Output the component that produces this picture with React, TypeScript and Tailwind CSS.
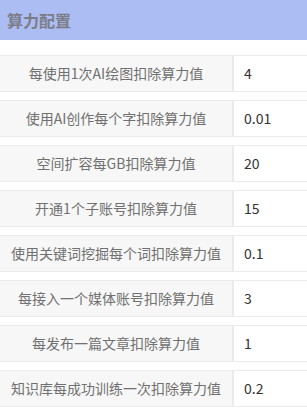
const rows = [
  { label: "每使用1次AI绘图扣除算力值", value: "4" },
  { label: "使用AI创作每个字扣除算力值", value: "0.01" },
  { label: "空间扩容每GB扣除算力值", value: "20" },
  { label: "开通1个子账号扣除算力值", value: "15" },
  { label: "使用关键词挖掘每个词扣除算力值", value: "0.1" },
  { label: "每接入一个媒体账号扣除算力值", value: "3" },
  { label: "每发布一篇文章扣除算力值", value: "1" },
  { label: "知识库每成功训练一次扣除算力值", value: "0.2" },
]

export default function App() {
  return (
    <div
      className="h-[411px] w-[307px] overflow-hidden bg-white"
      style={{ fontFamily: '"Noto Sans CJK SC", "Liberation Sans", sans-serif' }}
    >
      <div className="flex h-[40px] items-center bg-[#abbdf2] pl-[7px]">
        <span className="text-[16px] font-bold leading-none text-[#7c7c88]">算力配置</span>
      </div>
      <div className="flex w-[330px] flex-col gap-[8px] pt-[15px]">
        {rows.map((r) => (
          <div key={r.label} className="flex h-[37px] border-y border-[#ebebeb]">
            <div className="flex w-[234px] shrink-0 items-center justify-center border-r-2 border-[#ebebeb] bg-[#f7f7f7] text-[14px] text-[#707070]">
              {r.label}
            </div>
            <div className="flex flex-1 items-center pl-[10px] text-[14px] text-[#333]">{r.value}</div>
          </div>
        ))}
      </div>
    </div>
  )
}
